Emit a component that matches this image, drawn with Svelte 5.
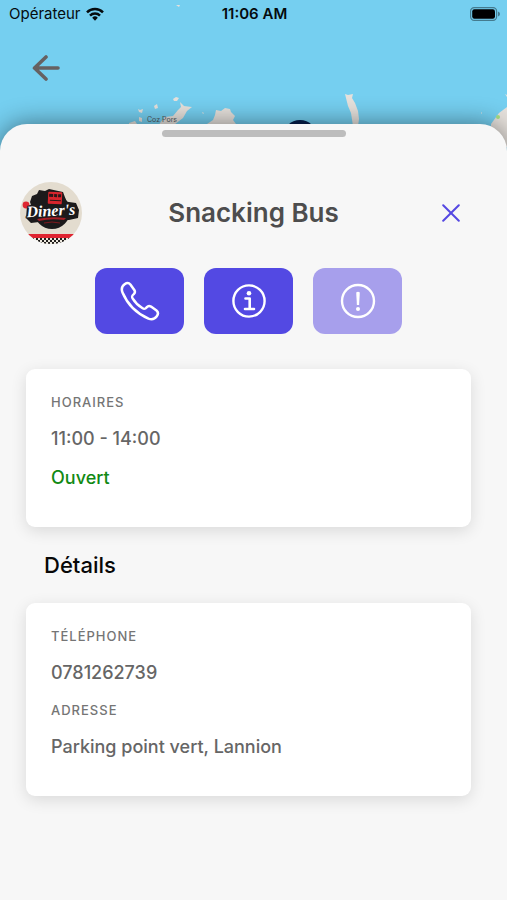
<script>
  const name = 'Snacking Bus';
  const phone = '0781262739';
  const address = 'Parking point vert, Lannion';
</script>

<div class="screen">
  <header class="top">
    <svg class="map" viewBox="0 0 507 160" preserveAspectRatio="xMidYMin slice" aria-hidden="true">
      <rect width="507" height="160" fill="#75cff0" />
      <g fill="#e6e1dc">
        <path d="M160 123l5-6 8-1 5-6 3-3-1-5 4 4 8 1-5 4-4 7-4 3-5 4-3 3h-13z" />
        <path d="M173 99l3-2 3 1-2 3-3 0z" />
        <path d="M138 109l2 1 3-1-1 4-3-1zM154 106l3-2 1 4-3 1zM139 117l3 1v4l-3-1zM129 123l6-2 2 3h-8z" />
        <path d="M207 124l6-4 2-5 1-5 5 1 4-3 5 1 1 3 4 4-2 4 3 4h-29z" />
        <path d="M345 94l3 1 5-1-1 4 3 5 3 8 1 8-1 7h-5l-2-13-3-7z" />
        <path d="M491 124l8-11 8-6v40h-16z" />
        <path d="M176 5l4 0-1 2zM202 112l2 1-1 1zM481 112l1 1-1 1zM505 94l2 1v2z" />
      </g>
      <circle cx="498" cy="117" r="2" fill="#a6df83" />
      <circle cx="300" cy="137" r="17" fill="#071f4c" />
      <text x="147" y="122" class="place">Coz Pors</text>
    </svg>
    <div class="status">
      <span class="carrier">
        Opérateur
        <svg width="18" height="14" viewBox="0 0 18 14" aria-hidden="true">
          <g fill="none" stroke="#050b0e" stroke-width="2.5">
            <path d="M1 5.3a11.4 11.4 0 0 1 16 0" />
            <path d="M4 8.6a7.2 7.2 0 0 1 10 0" />
          </g>
          <path d="M6.2 10.7a4 4 0 0 1 5.6 0L9 13.7z" fill="#050b0e" />
        </svg>
      </span>
      <time>11:06 AM</time>
      <svg class="battery" width="30" height="14" viewBox="0 0 30 14" aria-hidden="true">
        <rect x="0.6" y="0.6" width="26" height="12.8" rx="3.6" fill="none" stroke="#447b8f" stroke-width="1.2" />
        <rect x="2.2" y="2.2" width="22.8" height="9.6" rx="2.2" fill="#000" />
        <path d="M28 4.6q2 .8 2 2.4t-2 2.4z" fill="#447b8f" />
      </svg>
    </div>
    <button class="back" aria-label="Retour">
      <svg width="28" height="26" viewBox="0 0 28 26" fill="none" stroke="#666162" stroke-width="3.6" stroke-linecap="round" stroke-linejoin="round">
        <path d="M14 2L2.500 13 14 24M3 13h23" />
      </svg>
    </button>
  </header>

  <main class="sheet">
    <div class="handle"></div>

    <div class="title-row">
      <svg class="logo" width="62" height="62" viewBox="0 0 62 62" role="img" aria-label="Diner's">
        <defs>
          <clipPath id="disc"><circle cx="31" cy="31" r="31" /></clipPath>
          <pattern id="checks" width="4" height="4" patternUnits="userSpaceOnUse">
            <rect width="4" height="4" fill="#eee9df" />
            <path d="M0 0h2v2H0zM2 2h2v2H2z" fill="#201e1d" />
          </pattern>
        </defs>
        <g clip-path="url(#disc)">
          <rect width="62" height="62" fill="#e3dccf" />
          <path d="M12 14l5-2 2-4 6 1 4-2 14 3 3 8-2 5-32 3-2-6z" fill="#1c1a1b" />
          <circle cx="32" cy="29" r="18" fill="#1c1a1b" />
          <path d="M7 24l9-3 26-2 14 2 3 7-1 8-9 2-22 1-16 2-5-5z" fill="#1c1a1b" />
          <g transform="rotate(3 34 16)">
            <rect x="28" y="10" width="14" height="12" rx="1" fill="#d8252d" />
            <path d="M29 12h4v3h-4zM34 12h3v3h-3zM38 12h3v3h-3zM30 18h11v1H30z" fill="#2a1718" />
          </g>
          <circle cx="6" cy="23" r="3.4" fill="#de2631" />
          <path d="M17 37q14-3 29-1l-2 2q-13-2-25 1z" fill="#a51e25" />
          <path d="M24 41q8-2 16 0" stroke="#81191e" fill="none" />
          <text x="31" y="34" text-anchor="middle" transform="rotate(-3 31 31)" class="brand">Diner's</text>
          <rect y="52" width="62" height="4" fill="#df2430" />
          <rect y="56" width="62" height="6" fill="url(#checks)" />
        </g>
      </svg>
      <h1>{name}</h1>
      <button class="close" aria-label="Fermer">
        <svg width="18" height="18" viewBox="0 0 18 18" fill="none" stroke="#5548e2" stroke-width="2" stroke-linecap="round">
          <path d="M1.200 1.200l15.600 15.600M16.800 1.200L1.200 16.800" />
        </svg>
      </button>
    </div>

    <div class="actions">
      <button aria-label="Appeler">
        <svg width="40" height="40" viewBox="0 0 40 40" fill="none" stroke="#fff" stroke-width="2.5" stroke-linejoin="round">
          <path d="M4.600 3.200C6.400 1.900 8.800 1.600 10.400 3.500l3.900 5.500c1 1.600.7 3-.5 4.100-1.900 1.600-2.300 2.400-1.200 4.300 2.200 3.700 6.300 7.700 10 9.900 1.900 1.100 2.700.7 4.300-1.200 1.100-1.300 2.500-1.500 4.100-.5l5.500 3.900c1.900 1.600 1.600 4 .3 5.800-2 2.700-4.800 3.700-8.300 2.300C16.500 32.400 7.600 23.500 2.500 11.500 1.100 8 1.900 5.200 4.600 3.200z" />
        </svg>
      </button>
      <button aria-label="Informations">
        <svg width="36" height="36" viewBox="0 0 36 36" fill="none" stroke="#fff">
          <circle cx="18" cy="18" r="15.600" stroke-width="2.400" />
          <circle cx="18" cy="10.200" r="2.300" fill="#fff" stroke="none" />
          <path d="M14.500 15.500h4.200v10M14 26h9" stroke-width="2.600" stroke-linecap="round" stroke-linejoin="round" />
        </svg>
      </button>
      <button aria-label="Signaler" disabled>
        <svg width="36" height="36" viewBox="0 0 36 36" fill="none" stroke="#fff">
          <circle cx="18" cy="18" r="16" stroke-width="2.400" />
          <path d="M16.200 9.500q1.800-1.500 3.600 0l-.7 12.500h-2.200z" fill="#fff" stroke="none" />
          <circle cx="18" cy="26" r="2" fill="#fff" stroke="none" />
        </svg>
      </button>
    </div>

    <dl class="card">
      <dt>Horaires</dt>
      <dd>11:00 - 14:00</dd>
      <dd class="open">Ouvert</dd>
    </dl>

    <h2>Détails</h2>

    <dl class="card">
      <dt>Téléphone</dt>
      <dd>{phone}</dd>
      <dt>Adresse</dt>
      <dd>{address}</dd>
    </dl>
  </main>
</div>

<style>
  :global(body) {
    margin: 0;
    background: #f7f7f7;
  }
  .screen {
    min-height: 100vh;
    display: flex;
    flex-direction: column;
    position: relative;
    overflow: hidden;
    font-family: Inter, 'Liberation Sans', sans-serif;
  }
  button {
    border: 0;
    padding: 0;
    background: none;
    display: grid;
    place-items: center;
    cursor: pointer;
  }
  svg {
    display: block;
  }
  .top {
    padding-bottom: 37px;
  }
  .map {
    position: absolute;
    top: 0;
    left: 0;
    width: 100%;
    height: 160px;
  }
  .place {
    font-size: 7px;
    fill: #4d575c;
  }
  .status {
    position: relative;
    display: grid;
    grid-template-columns: 1fr auto 1fr;
    align-items: center;
    height: 27px;
    padding: 0 7px 0 9px;
    font-size: 15px;
    color: #050b0e;
  }
  .carrier {
    display: flex;
    align-items: center;
    gap: 5px;
  }
  time {
    font-weight: 600;
  }
  .battery {
    justify-self: end;
  }
  .back {
    position: relative;
    margin: 22px 0 0 22px;
    width: 48px;
    height: 38px;
  }
  .sheet {
    position: relative;
    flex: 1;
    padding: 6px 36px 40px 26px;
    border-radius: 27px 27px 0 0;
    background: #f7f7f7;
    box-shadow: 0 0 26px rgba(0, 0, 0, 0.48);
  }
  .handle {
    width: 184px;
    height: 7px;
    margin: 0 auto;
    border-radius: 4px;
    background: #bdbdbd;
    position: relative;
    left: 5px;
  }
  .title-row {
    display: grid;
    grid-template-columns: 62px 1fr 62px;
    align-items: center;
    margin: 45px -16px 0 -6px;
  }
  .brand {
    font-family: 'Liberation Serif', serif;
    font-size: 16px;
    font-style: italic;
    font-weight: 700;
    fill: #fff;
    stroke: #1c1a1b;
    stroke-width: 2px;
    paint-order: stroke;
  }
  h1 {
    margin: 0;
    text-align: center;
    font-size: 26px;
    line-height: 32px;
    font-weight: 600;
    color: #4d4d4d;
  }
  .close {
    width: 52px;
    height: 34px;
  }
  .actions {
    display: flex;
    justify-content: center;
    gap: 20px;
    margin: 24px 0 35px;
  }
  .actions button {
    width: 89px;
    height: 66px;
    border-radius: 12px;
    background: #5349e3;
  }
  .actions button:disabled {
    background: #a79fec;
    cursor: default;
  }
  .card {
    margin: 0;
    padding: 24px 25px 36px;
    border-radius: 9px;
    background: #fff;
    box-shadow: 0 4px 16px rgba(0, 0, 0, 0.12);
  }
  dt {
    font-size: 13px;
    line-height: 18px;
    letter-spacing: 1px;
    font-weight: 500;
    text-transform: uppercase;
    color: #757575;
  }
  dd {
    margin: 15px 0 0;
    font-size: 18px;
    line-height: 26px;
    font-weight: 500;
    color: #666;
  }
  dd + dt {
    margin-top: 15px;
  }
  dd.open {
    margin-top: 13px;
    color: #118a14;
  }
  h2 {
    margin: 23px 18px;
    font-size: 22px;
    line-height: 30px;
    font-weight: 500;
    color: #080808;
  }
</style>
